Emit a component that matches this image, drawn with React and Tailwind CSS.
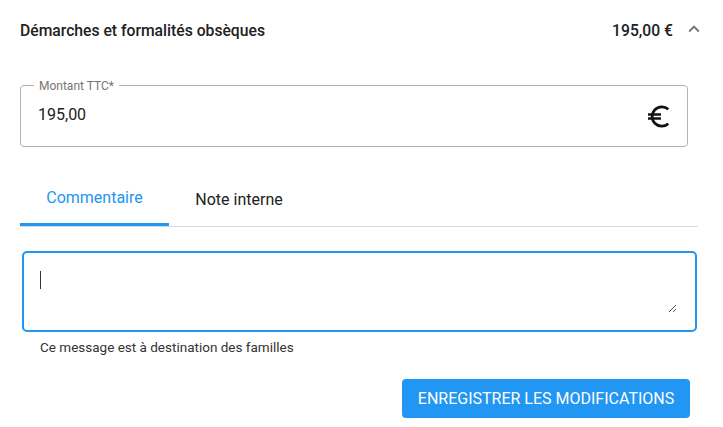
export default function App() {
  return (
    <div className="w-[723px] h-[427px] bg-white font-['Roboto',sans-serif] text-[#212121] overflow-hidden">
      {/* header */}
      <div className="flex items-center h-[62px] pl-[20px] pr-[18px]">
        <div className="flex-1 text-[15.7px] font-medium">Démarches et formalités obsèques</div>
        <div className="text-[15.7px] font-medium">195,00 €</div>
        <svg className="ml-[10px] w-[22px] h-[22px] text-[#757575] -mt-[4px]" viewBox="0 0 24 24" fill="currentColor">
          <path d="M7.41 15.41 12 10.83l4.59 4.58L18 14l-6-6-6 6z" />
        </svg>
      </div>

      {/* montant */}
      <div className="pl-[20px] pr-[35px] pt-[23px]">
        <div className="relative h-[62px] border border-[#b3b3b3] rounded-[4px] pl-[17px] pr-[14px] flex items-center">
          <span className="absolute left-[13px] -top-[8px] bg-white px-[5px] text-[12px] text-[#757575] leading-[16px]">Montant TTC*</span>
          <div className="flex-1 text-[16px] -mt-[3px]">195,00</div>
          <svg className="w-[27px] h-[27px] text-[#111]" viewBox="0 0 24 24" fill="none" stroke="currentColor" strokeWidth="2.5">
            <path d="M19.8 5.6A8.6 8.6 0 1 0 19.8 18.4" />
            <path d="M1.8 10.2h11.5M1.8 13.8h11.5" strokeWidth="2.1" />
          </svg>
        </div>
      </div>

      {/* tabs */}
      <div className="ml-[20px] mr-[25px] mt-[30px] flex border-b border-[#d9d9e0]">
        <div className="w-[149px] h-[49px] flex items-center justify-center text-[16px] text-[#2196f3] border-b-[3px] border-[#2196f3] -mb-px pb-[4px]">Commentaire</div>
        <div className="w-[140px] h-[49px] flex items-center justify-center text-[16px] text-[#212121] pb-[4px]">Note interne</div>
      </div>

      {/* textarea */}
      <div className="ml-[22px] mr-[26px] mt-[24px] relative h-[81px] border-2 border-[#2196f3] rounded-[5px]">
        <div className="absolute left-[16px] top-[18px] w-px h-[18px] bg-[#333]" />
        <svg className="absolute right-[18px] bottom-[17px] w-[9px] h-[9px]" viewBox="0 0 9 9" stroke="#555" strokeWidth="1">
          <line x1="1" y1="8" x2="8" y2="1" />
          <line x1="5" y1="8" x2="8" y2="5" />
        </svg>
      </div>
      <div className="ml-[40px] mt-[5px] text-[13.5px] text-[#333]">Ce message est à destination des familles</div>

      {/* button */}
      <div className="flex justify-end pr-[33px] mt-[22px]">
        <button className="w-[288px] h-[39px] bg-[#2196f3] rounded-[4px] text-white text-[16px] font-normal uppercase">
          Enregistrer les modifications
        </button>
      </div>
    </div>
  );
}
